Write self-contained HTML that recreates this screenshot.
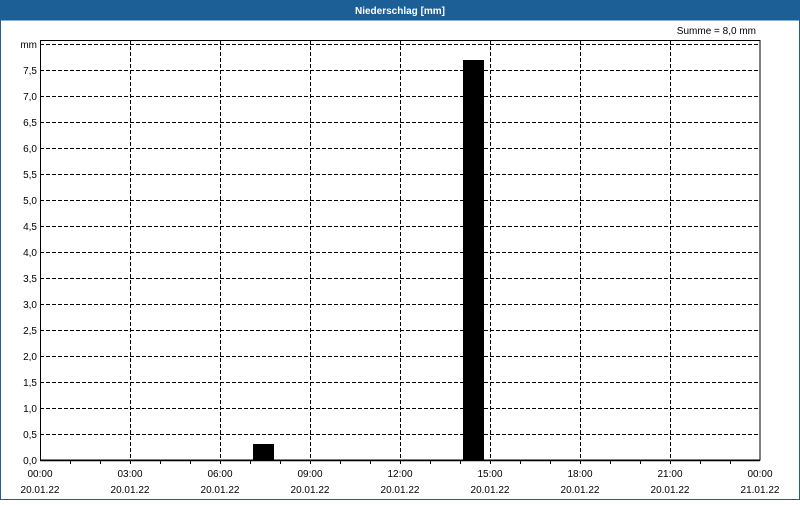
<!DOCTYPE html>
<html><head><style>
html,body{margin:0;padding:0;background:#fff}
body{width:800px;height:500px;overflow:hidden;font-family:"Liberation Sans",sans-serif}
</style></head><body>
<svg width="800" height="500" xmlns="http://www.w3.org/2000/svg" font-family="Liberation Sans, sans-serif" font-size="10">
<rect x="0" y="0" width="800" height="500" fill="#fff"/>
<rect x="0" y="0" width="800" height="20" fill="#1c5f96"/>
<rect x="0.5" y="20" width="799" height="479.5" fill="none" stroke="#1c5f96" stroke-width="1"/>
<text x="400" y="14" fill="#fff" font-weight="bold" text-anchor="middle" font-size="10">Niederschlag [mm]</text>
<text x="756" y="34" text-anchor="end" fill="#000">Summe = 8,0 mm</text>
<g stroke="#000" stroke-width="1" stroke-dasharray="4,2" fill="none">
<path d="M40 44.5H760M40 70.5H760M40 96.5H760M40 122.5H760M40 148.5H760M40 174.5H760M40 200.5H760M40 226.5H760M40 252.5H760M40 278.5H760M40 304.5H760M40 330.5H760M40 356.5H760M40 382.5H760M40 408.5H760M40 434.5H760"/>
<path d="M130.5 40V460M220.5 40V460M310.5 40V460M400.5 40V460M490.5 40V460M580.5 40V460M670.5 40V460"/>
</g>
<rect x="40.5" y="40.5" width="719.5" height="419.5" fill="none" stroke="#000" stroke-width="1"/>
<path d="M40 460.5H760" stroke="#000" stroke-width="1.5"/>
<g stroke="#000" stroke-width="1">
<path d="M70.5 460V464M100.5 460V464M130.5 460V464M160.5 460V464M190.5 460V464M220.5 460V464M250.5 460V464M280.5 460V464M310.5 460V464M340.5 460V464M370.5 460V464M400.5 460V464M430.5 460V464M460.5 460V464M490.5 460V464M520.5 460V464M550.5 460V464M580.5 460V464M610.5 460V464M640.5 460V464M670.5 460V464M700.5 460V464M730.5 460V464"/>
</g>
<rect x="253" y="444" width="21" height="16" fill="#000"/>
<rect x="463" y="60" width="21" height="400" fill="#000"/>
<g text-anchor="end" fill="#000">
<text x="37" y="48">mm</text>
<text x="37" y="74">7,5</text><text x="37" y="100">7,0</text><text x="37" y="126">6,5</text><text x="37" y="152">6,0</text>
<text x="37" y="178">5,5</text><text x="37" y="204">5,0</text><text x="37" y="230">4,5</text><text x="37" y="256">4,0</text>
<text x="37" y="282">3,5</text><text x="37" y="308">3,0</text><text x="37" y="334">2,5</text><text x="37" y="360">2,0</text>
<text x="37" y="386">1,5</text><text x="37" y="412">1,0</text><text x="37" y="438">0,5</text><text x="37" y="464">0,0</text>
</g>
<g text-anchor="middle" fill="#000">
<text x="40" y="477">00:00</text><text x="40" y="493">20.01.22</text>
<text x="130" y="477">03:00</text><text x="130" y="493">20.01.22</text>
<text x="220" y="477">06:00</text><text x="220" y="493">20.01.22</text>
<text x="310" y="477">09:00</text><text x="310" y="493">20.01.22</text>
<text x="400" y="477">12:00</text><text x="400" y="493">20.01.22</text>
<text x="490" y="477">15:00</text><text x="490" y="493">20.01.22</text>
<text x="580" y="477">18:00</text><text x="580" y="493">20.01.22</text>
<text x="670" y="477">21:00</text><text x="670" y="493">20.01.22</text>
<text x="760" y="477">00:00</text><text x="760" y="493">21.01.22</text>
</g>
</svg>
</body></html>
